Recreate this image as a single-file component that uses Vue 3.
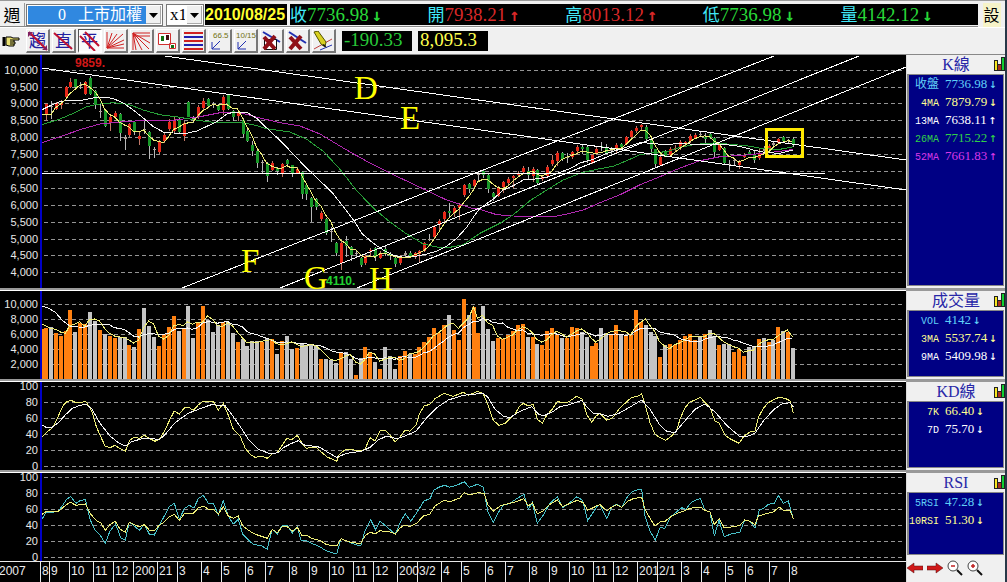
<script setup>
import { ref } from 'vue'

const quotes = [
  { name: '收', value: '7736.98', arrow: '↓', tone: 'down' },
  { name: '開', value: '7938.21', arrow: '↑', tone: 'up' },
  { name: '高', value: '8013.12', arrow: '↑', tone: 'up' },
  { name: '低', value: '7736.98', arrow: '↓', tone: 'down' },
  { name: '量', value: '4142.12', arrow: '↓', tone: 'down' },
]
const symbol = ref('taiex')
const zoomLevel = ref('1')

const panels = [
  {
    id: 'k', title: 'K線', top: 55, height: 233,
    rows: [
      ['收盤', '7736.98', '↓', 'cyan'],
      ['4MA', '7879.79', '↓', 'yellow'],
      ['13MA', '7638.11', '↑', 'white'],
      ['26MA', '7715.22', '↑', 'green'],
      ['52MA', '7661.83', '↑', 'magenta'],
    ],
  },
  {
    id: 'vol', title: '成交量', top: 291, height: 88,
    rows: [
      ['VOL', '4142', '↓', 'cyan'],
      ['3MA', '5537.74', '↓', 'yellow'],
      ['9MA', '5409.98', '↓', 'white'],
    ],
  },
  {
    id: 'kd', title: 'KD線', top: 382, height: 88,
    rows: [
      ['7K', '66.40', '↓', 'yellow'],
      ['7D', '75.70', '↓', 'white'],
    ],
  },
  {
    id: 'rsi', title: 'RSI', top: 473, height: 109,
    rows: [
      ['5RSI', '47.28', '↓', 'cyan'],
      ['10RSI', '51.30', '↓', 'yellow'],
    ],
  },
]

const percentTicks = (ys) => ys.map((y, i) => ({ y, text: String(100 - i * 20) }))
const ticks = {
  k: [70, 87, 103, 120, 137, 154, 171, 188, 205, 222, 239, 255, 272].map((y, i) => ({
    y, text: (10000 - i * 500).toLocaleString('en-US'),
  })),
  vol: [304, 319, 334, 349, 364].map((y, i) => ({ y, text: (10000 - i * 2000).toLocaleString('en-US') })),
  kd: percentTicks([386, 402, 418, 434, 450, 466]),
  rsi: percentTicks([477, 493, 509, 525, 541, 557]),
}

// Left edge of the k-th week.
const weekX = (k) => Math.floor(44.4 + 4.9157 * k)

// Curves are sampled on a grid of thirds; each run is [originX, originY, x, y, x, y, ...].
const curve = (...runs) => runs.map(([ox, oy, ...p]) => {
  const out = []
  for (let i = 0; i < p.length; i += 2) out.push(`${(ox + p[i] / 3).toFixed(1)},${(oy + p[i + 1] / 3).toFixed(1)}`)
  return out.join(' ')
}).join(' ')

// Weekly candles: colour, high, body top, body bottom, low.
const candleText = `r 148 150 180 200|w 140 155 160 195|r 143 148 165 168|r 138 146 152 165|r 95 98 130 132|r 72 85 98 102|g 75 75 100 104|w 84 92 94 106|r 82 84 120 124|g 66 72 120 124|g 108 112 150 165|w 150 170 173 192|g 165 168 215 218|r 182 188 208 232|r 172 178 188 192|g 178 180 236 262|w 242 248 254 288|r 206 210 242 250|g 200 204 232 242|r 235 245 256 272|w 198 225 228 240|g 230 234 275 315|w 280 284 286 312|r 258 262 294 300|r 238 242 262 266|r 196 204 226 230|r 185 198 232 236|g 192 195 235 240|r 200 206 246 262|g 142 145 188 190|w 185 192 196 208|r 152 158 190 196|r 132 140 162 168|g 132 134 155 158|w 145 150 153 162|g 150 154 168 172|r 122 130 168 182|g 122 124 165 168|g 168 172 188 200|r 172 174 186 200|g 192 198 240 250|g 226 230 262 264|g 262 274 292 306|g 288 292 328 342|w 318 324 326 358|g 324 328 366 384|r 320 326 348 352|g 340 342 350 362|r 328 330 356 370|g 314 318 330 336|g 332 334 356 368|r 338 344 356 360|g 352 354 420 434|g 388 394 420 438|g 430 432 458 504|g 432 436 460 468|r 470 476 496 502|g 492 496 536 544|w 520 530 532 564|g 564 568 598 606|r 562 566 626 648|g 546 560 576 608|g 575 580 604 620|w 592 598 600 608|g 608 612 632 638|r 600 606 626 632|r 582 588 592 606|g 578 582 608 622|r 592 598 612 616|g 575 584 598 606|g 595 600 606 618|g 608 612 630 640|r 602 608 626 632|w 592 598 602 610|g 592 596 606 612|r 594 598 606 616|r 588 592 600 626|r 564 568 590 594|w 540 556 558 562|r 512 518 548 556|r 496 502 512 532|r 470 474 496 506|g 446 470 476 490|r 456 462 478 488|r 448 452 462 498|r 390 394 422 428|g 386 390 404 418|r 374 378 396 402|w 354 360 362 382|g 348 352 362 372|g 356 362 404 416|g 414 418 428 442|r 396 402 426 430|r 380 384 400 416|r 370 376 386 396|r 364 366 372 402|r 350 358 362 368|r 336 342 354 358|g 340 352 362 376|r 338 346 366 384|g 346 348 386 390|r 362 368 376 382|r 334 338 366 372|r 302 318 330 336|r 292 298 320 336|g 294 296 316 320|w 296 308 312 326|r 290 294 310 316|r 274 280 290 304|g 270 278 284 300|g 276 280 318 328|r 300 304 326 330|r 280 286 298 302|g 264 276 280 290|g 270 280 296 300|w 280 288 292 302|r 268 272 284 300|g 266 270 278 282|r 246 250 270 274|r 228 232 250 258|r 216 222 232 238|r 210 214 220 230|g 212 220 256 262|g 252 258 286 300|g 284 286 330 342|r 304 308 332 336|g 288 290 306 310|r 280 284 302 306|r 272 282 286 292|r 258 264 282 288|r 260 264 270 280|r 240 246 262 268|r 236 242 252 256|w 232 240 242 250|g 236 250 254 270|g 236 240 252 256|g 248 252 294 312|r 266 272 288 292|g 278 282 326 332|w 318 330 332 350|w 312 318 320 336|r 318 322 334 346|r 298 306 310 312|g 288 294 300 304|g 292 302 318 326|r 286 298 312 318|w 276 284 290 296|r 270 276 284 290|w 264 268 272 280|r 252 254 266 268|g 246 250 262 268|w 254 258 262 266|g 248 256 274 280`
const candles = candleText.split('|').map((row, k) => {
  const [tone, ...n] = row.split(' ')
  const [high, top, bottom, low] = n.map((v) => Math.round(54 + Number(v) / 3))
  return { tone, high, top, low, x: weekX(k), h: Math.max(1, bottom - top), close: tone === 'g' ? bottom : top }
})

const average = (values, span, xs) => values.map((_, k) => {
  if (k < span - 1) return null
  const sum = values.slice(k - span + 1, k + 1).reduce((a, b) => a + b, 0)
  return `${xs(k) + 1.5},${(sum / span).toFixed(1)}`
}).filter(Boolean).join(' ')

const ma4 = '42,114.5 51,115 55,108 ' + average(candles.map((c) => c.close), 4, weekX)
const ma13 = curve(
  [0, 54, 126, 167, 150, 155, 180, 143, 210, 138, 250, 138, 280, 132, 320, 130, 345, 136, 370, 147, 400, 168, 430, 192, 460, 218, 490, 234, 520, 237, 560, 238, 590, 231, 625, 215, 650, 203, 680, 180, 700, 175],
  [240, 54, 0, 174, 20, 175, 50, 193, 80, 222, 110, 250, 150, 290, 180, 322, 210, 352, 250, 390, 280, 420, 310, 458, 345, 505, 365, 538, 400, 568, 430, 588, 460, 604, 490, 610, 530, 606, 560, 600, 590, 592, 620, 577, 650, 553, 680, 520, 705, 482],
  [480, 54, 0, 463, 40, 435, 70, 408, 100, 395, 130, 378, 160, 376, 200, 370, 240, 355, 270, 344, 300, 327, 340, 316, 380, 298, 420, 286, 450, 276, 480, 266, 520, 268, 545, 272, 580, 270],
  [680, 54, 0, 268, 60, 272, 100, 270, 160, 274, 190, 280, 220, 288, 260, 296, 300, 298, 340, 288],
)
const ma26 = curve(
  [0, 54, 126, 212, 180, 195, 220, 178, 260, 158, 290, 151, 340, 146, 385, 151, 430, 168, 480, 182, 540, 190, 600, 200, 650, 206],
  [240, 54, 0, 206, 40, 212, 80, 224, 150, 234, 200, 256, 250, 292, 300, 346, 350, 410, 400, 462, 450, 504, 500, 540, 550, 570, 590, 579, 630, 580, 670, 572],
  [480, 54, 0, 538, 60, 508, 100, 482, 150, 440, 200, 408, 250, 378, 300, 358, 350, 346, 400, 337, 440, 320, 480, 302, 520, 296, 560, 293],
  [680, 54, 0, 280, 40, 272, 80, 268, 140, 270, 200, 275, 250, 284, 300, 286, 340, 278],
)
const ma52 = curve(
  [0, 54, 126, 266, 180, 248, 240, 227, 300, 210, 360, 204, 420, 200, 520, 199, 600, 188, 660, 176],
  [240, 54, 0, 176, 60, 192, 120, 206, 180, 216, 240, 240, 310, 282, 380, 322, 460, 362, 540, 400, 620, 438, 700, 464],
  [480, 54, 0, 466, 50, 482, 100, 486, 160, 489, 220, 488, 260, 480, 310, 468, 360, 446, 420, 422, 480, 392, 540, 368],
  [680, 54, 0, 342, 60, 320, 120, 308, 200, 303, 250, 298, 300, 292, 340, 286],
)

const trends = [
  [165, 56, 906, 160], [42, 68, 906, 190], [42, 173, 825, 173],
  [182, 288, 774, 56], [280, 288, 859, 56], [357, 288, 906, 67],
]
const marks = [
  { text: 'D', x: 354, y: 99 }, { text: 'E', x: 400, y: 129 }, { text: 'F', x: 241, y: 272 },
  { text: 'G', x: 304, y: 289 }, { text: 'H', x: 369, y: 290 },
]

// Weekly volume: colour (o = up week, g = down week) and bar top.
const volumeText = 'o126 g124 o141 o150 o136 o72 g138 o112 o115 g78 g105 o132 g144 o150 o155 g152 g153 o177 g183 o129 g66 g120 g153 o180 o145 o124 o90 g135 o129 g60 g156 o108 o60 g102 g138 g117 o108 g108 g142 o168 g160 g180 g165 g165 o167 g156 o160 g204 o165 g150 g189 o186 g171 g180 g177 g178 o219 g219 g222 g231 o201 g198 g219 o267 g216 o183 o198 g228 o249 g183 g210 g249 o210 o195 g204 o204 o183 o168 o153 o126 o141 o117 g87 o132 o162 o39 g87 o63 o141 g60 g129 g165 o156 o160 o147 o135 o117 o114 g153 o153 g174 o177 o135 o126 o147 g156 o156 o123 o127 g138 g153 o180 o171 g126 g141 o145 o117 g145 o150 o147 o72 o108 g117 g138 g150 o213 g177 o174 o177 o162 o150 o145 o163 g150 o145 g132 g150 o177 g174 g174 o198 o189 o210 g183 g183 o159 g156 o168 g163 o123 g135 o138 g186'
const volumes = volumeText.split(' ').map((v, k) => ({
  tone: v[0], x: weekX(k), y: Math.round(286 + Number(v.slice(1)) / 3),
}))
const volumeTops = volumes.map((v) => v.y)
const vol3 = '42,324 50,328 ' + average(volumeTops, 3, weekX)
const vol9 = '42,306 48,308 55,312 63,321 70,326 78,327 ' + average(volumeTops, 9, weekX)

const kLine = curve(
  [0, 286, 126, 452, 145, 435, 160, 423, 175, 390, 190, 358, 200, 347, 213, 343, 228, 350, 258, 347, 275, 375, 290, 425, 315, 480, 330, 485, 345, 478, 360, 488, 376, 496, 390, 462, 405, 453, 418, 457, 433, 448, 450, 458, 465, 466, 480, 458, 495, 432, 510, 400, 523, 375, 538, 384, 553, 366, 565, 363, 580, 373, 595, 357, 610, 346, 640, 346, 655, 373, 670, 352, 685, 388, 700, 430, 720, 450, 735, 485, 750, 505, 765, 514, 785, 511, 802, 517, 817, 504, 832, 500, 845, 480, 860, 457, 875, 461, 892, 448, 905, 470, 918, 487, 935, 484, 950, 486],
  [320, 286, 0, 495, 20, 512, 50, 526, 58, 505, 75, 492, 90, 490, 105, 493, 125, 495, 135, 490, 150, 455, 165, 465, 180, 434, 195, 433, 210, 448, 226, 468, 240, 453, 255, 432, 270, 436, 288, 418, 298, 385, 312, 360, 330, 355, 345, 338, 372, 322, 400, 331, 430, 319, 445, 328, 473, 316, 490, 323, 505, 360, 520, 403, 537, 418, 555, 412, 570, 398, 585, 385, 597, 363, 610, 352, 625, 360, 640, 355, 652, 400, 667, 411, 680, 388, 698, 368, 712, 346, 725, 350, 745, 348, 770, 331, 787, 340, 800, 385, 815, 409, 828, 390],
  [600, 286, 0, 382, 20, 403, 38, 395, 55, 372, 75, 352, 95, 334, 112, 332, 125, 323, 135, 355, 150, 410, 165, 445, 180, 455, 197, 463, 215, 450, 230, 432, 240, 400, 255, 365, 270, 348, 285, 342, 301, 334, 315, 350, 330, 365, 345, 405, 358, 412, 375, 448, 390, 458, 417, 472, 432, 450, 450, 438, 465, 436, 475, 395, 490, 367, 505, 350, 520, 342, 537, 334, 555, 337, 570, 344, 580, 380],
)
const dLine = curve(
  [0, 286, 126, 417, 140, 425, 155, 425, 175, 410, 195, 388, 215, 368, 240, 358, 258, 355, 275, 368, 300, 412, 330, 450, 355, 470, 376, 480, 395, 467, 430, 457, 480, 460, 500, 440, 525, 410, 565, 382, 600, 368, 640, 354, 655, 360, 675, 358, 700, 392, 725, 428, 745, 460, 775, 490, 810, 503, 835, 500, 850, 485, 875, 472, 895, 464, 915, 478, 945, 481],
  [320, 286, 0, 484, 25, 500, 50, 514, 80, 502, 125, 496, 150, 484, 175, 462, 200, 450, 230, 458, 260, 448, 288, 435, 320, 396, 350, 365, 385, 342, 430, 328, 490, 322, 505, 335, 525, 370, 550, 390, 570, 395, 600, 376, 635, 362, 655, 384, 670, 390, 700, 376, 720, 362, 745, 357, 785, 343, 800, 362, 820, 382],
  [600, 286, 0, 384, 25, 391, 55, 383, 90, 363, 125, 342, 150, 370, 180, 418, 200, 436, 225, 440, 250, 410, 285, 370, 315, 354, 345, 378, 380, 418, 417, 450, 445, 450, 465, 442, 490, 405, 520, 372, 545, 354, 570, 350, 580, 362],
)
const rsi10 = curve(
  [0, 286, 126, 685, 138, 677, 175, 676, 192, 662, 210, 648, 228, 658, 256, 654, 272, 685, 290, 704, 302, 710, 316, 733, 330, 716, 346, 706, 360, 730, 376, 738, 388, 708, 405, 717, 418, 722, 433, 716, 448, 732, 463, 734, 478, 718, 493, 708, 508, 692, 523, 685, 538, 703, 553, 683, 565, 682, 580, 682, 595, 666, 610, 660, 625, 669, 640, 670, 655, 684, 670, 662, 685, 690, 700, 697, 715, 690, 728, 720, 745, 732, 757, 740, 775, 748, 802, 757, 817, 730, 832, 740, 847, 722, 862, 722, 877, 736, 892, 724, 905, 748, 920, 748, 935, 757, 955, 762],
  [320, 286, 0, 763, 20, 776, 50, 780, 63, 758, 80, 765, 95, 770, 122, 772, 135, 750, 150, 738, 165, 744, 180, 734, 210, 738, 226, 744, 240, 726, 255, 717, 270, 722, 290, 712, 310, 690, 330, 684, 345, 660, 372, 643, 390, 647, 420, 636, 432, 620, 448, 627, 475, 620, 492, 622, 503, 655, 520, 676, 540, 660, 560, 654, 585, 648, 612, 638, 625, 660, 637, 650, 652, 684, 670, 674, 690, 655, 712, 642, 728, 662, 750, 652, 772, 643, 790, 650, 803, 672, 820, 665, 832, 658],
  [600, 286, 0, 656, 20, 674, 35, 664, 50, 656, 65, 664, 85, 645, 100, 638, 125, 634, 135, 670, 150, 697, 165, 720, 180, 708, 195, 706, 215, 690, 235, 680, 250, 676, 270, 667, 301, 663, 315, 673, 330, 678, 343, 715, 358, 698, 373, 726, 400, 722, 420, 718, 434, 702, 450, 706, 465, 716, 475, 690, 495, 684, 520, 678, 537, 663, 550, 672, 570, 672, 580, 698],
)
const rsi5 = curve(
  [0, 286, 126, 700, 138, 679, 155, 679, 175, 676, 190, 655, 200, 640, 212, 631, 228, 652, 240, 644, 256, 640, 270, 700, 285, 732, 302, 750, 316, 772, 330, 735, 347, 714, 362, 755, 376, 762, 388, 708, 405, 722, 418, 733, 433, 716, 448, 744, 463, 747, 478, 718, 493, 690, 508, 662, 523, 652, 538, 700, 553, 668, 568, 658, 582, 666, 595, 638, 610, 628, 625, 652, 640, 652, 655, 686, 670, 644, 685, 690, 700, 714, 715, 700, 728, 745, 745, 762, 760, 775, 785, 780, 802, 790, 817, 730, 832, 744, 847, 718, 862, 718, 877, 741, 892, 722, 903, 763, 920, 764, 940, 774, 955, 780],
  [320, 286, 0, 783, 20, 795, 50, 804, 63, 758, 80, 765, 95, 772, 122, 780, 135, 735, 152, 702, 167, 732, 180, 706, 200, 722, 226, 745, 240, 710, 256, 683, 272, 706, 290, 680, 312, 645, 330, 638, 342, 612, 360, 602, 375, 598, 388, 604, 410, 598, 433, 587, 448, 604, 472, 595, 490, 603, 503, 675, 520, 710, 535, 680, 550, 658, 570, 652, 590, 638, 612, 625, 625, 670, 637, 650, 652, 712, 668, 690, 690, 652, 712, 632, 728, 665, 745, 654, 770, 632, 788, 643, 803, 704, 820, 678, 832, 660],
  [600, 286, 0, 656, 20, 698, 35, 664, 50, 654, 65, 665, 80, 635, 95, 618, 110, 612, 125, 610, 135, 690, 150, 735, 166, 762, 180, 725, 195, 727, 212, 692, 245, 665, 257, 670, 275, 648, 301, 637, 315, 673, 330, 678, 343, 750, 357, 703, 373, 753, 390, 745, 420, 738, 434, 702, 450, 706, 465, 726, 478, 672, 490, 668, 505, 655, 523, 652, 535, 628, 550, 652, 565, 645, 580, 698],
)

const months = [
  [40, '8'], [49, '9'], [69, '10'], [93, '11'], [113, '12'], [133, '200'], [157, '21'], [177, '3'], [201, '4'],
  [221, '5'], [245, '6'], [265, '7'], [289, '8'], [309, '9'], [329, '10'], [353, '11'], [373, '12'], [397, '200'],
  [417, '3/2'], [441, '4'], [461, '5'], [485, '6'], [505, '7'], [529, '8'], [549, '9'], [569, '10'], [593, '11'],
  [613, '12'], [637, '201'], [657, '2/1'], [681, '3'], [701, '4'], [725, '5'], [745, '6'], [769, '7'], [789, '8'],
]
</script>

<template>
  <main class="app">
    <header class="top">
      <button class="week" type="button">週</button>
      <div class="pick symbol">
        <select v-model="symbol" aria-label="股票代號"><option value="taiex">0&nbsp;&nbsp;&nbsp;上市加權</option></select>
        <svg viewBox="0 0 15 18" aria-hidden="true"><path d="M3 7h9l-4.500 5z" /></svg>
      </div>
      <div class="pick scale">
        <select v-model="zoomLevel" aria-label="倍率"><option value="1">x1</option></select>
        <svg viewBox="0 0 15 18" aria-hidden="true"><path d="M3 7h9l-4.500 5z" /></svg>
      </div>
      <time class="date">2010/08/25</time>
      <div class="quotes">
        <div v-for="q in quotes" :key="q.name" :class="q.tone">
          <span class="name">{{ q.name }}</span>{{ q.value }}<b>{{ q.arrow }}</b>
        </div>
      </div>
      <button class="settings" type="button">設</button>
    </header>

    <nav class="tools">
      <button type="button" class="flat" aria-label="指標">
        <svg viewBox="0 0 21 20"><path d="M3 6v9" stroke="#000" stroke-width="3" /><path d="M5 6h5l2 1h6v2h-5v2h1v2h-1v2H8l-3-1z" fill="#e8e070" stroke="#000" /><path d="M9 9h4M9 11h4M9 13h4" stroke="#000" /></svg>
      </button>
      <button type="button" class="glyph" aria-label="趨勢線"><span>趨</span>
        <svg viewBox="0 0 21 20"><path d="M2 1l18 18" stroke="#c01030" stroke-width="2" /><path d="M1 1h5L1 6zM20 19h-5l5-5z" fill="#802060" /></svg>
      </button>
      <button type="button" class="glyph" aria-label="直線"><span>直</span>
        <svg viewBox="0 0 21 20"><path d="M1 2l18 16" stroke="#c01030" stroke-width="2" /></svg>
      </button>
      <button type="button" class="glyph pressed" aria-label="平行線"><span>平</span>
        <svg viewBox="0 0 21 20"><path d="M1 5l15 15M6 1l14 14" stroke="#c01030" stroke-width="2" /></svg>
      </button>
      <button type="button" aria-label="上升扇形">
        <svg viewBox="0 0 21 20"><path d="M2 1v16h17M2 17L7 2M2 17L12 3M2 17L18 3M2 17L19 9M2 17L19 13" stroke="#d02020" fill="none" /></svg>
      </button>
      <button type="button" aria-label="下降扇形">
        <svg viewBox="0 0 21 20"><path d="M2 19V2h17M2 5h17M2 2l3 17M2 2l9 17M2 2l16 16M2 2l17 10" stroke="#d02020" fill="none" /></svg>
      </button>
      <button type="button" aria-label="區間">
        <svg viewBox="0 0 21 20"><path d="M1.500 2.500h12v11h-12zM12.500 12.500h6v5h-6z" fill="#fff" stroke="#d03030" /><path d="M4 5h3v5H4zM14 14h3v3h-3z" fill="#107010" /><path d="M9 4h3v5H9z" fill="#401010" /></svg>
      </button>
      <button type="button" aria-label="黃金分割">
        <svg viewBox="0 0 21 20"><path d="M1 2h19M1 10h19M1 18h19" stroke="#d02020" stroke-width="2" /><path d="M1 6h19M1 14h19" stroke="#2020b0" stroke-width="2" /></svg>
      </button>
      <button type="button" aria-label="角度 66.5">
        <svg viewBox="0 0 21 20"><text x="4" y="7">66.5</text><path d="M11 10l-8 8M3 11v7h8" stroke="#2030b0" fill="none" /></svg>
      </button>
      <button type="button" aria-label="角度 10/15">
        <svg viewBox="0 0 21 20"><text x="1" y="7">10/15</text><path d="M11 10l-8 8M3 11v7h8" stroke="#2030b0" fill="none" /></svg>
      </button>
      <button type="button" aria-label="刪除全部">
        <svg viewBox="0 0 21 20"><path d="M2 1l17 10" stroke="#2030b0" stroke-width="2" /><path d="M3.500 8.500h12v10h-12z" fill="#fff" stroke="#111" /><path d="M3 6l11 12M14 5L3 18" stroke="#901018" stroke-width="4" /></svg>
      </button>
      <button type="button" aria-label="刪除">
        <svg viewBox="0 0 21 20"><path d="M2 1l17 11" stroke="#2030b0" stroke-width="2" /><path d="M3 6l11 12M14 5L3 18" stroke="#901018" stroke-width="4" /></svg>
      </button>
      <button type="button" aria-label="畫線">
        <svg viewBox="0 0 21 20"><path d="M1 18l18-10" stroke="#c04040" /><path d="M7 19l12-5" stroke="#2030b0" /><path d="M1 1l4-1 8 11-1 5-4-3z" fill="#d8d020" stroke="#555500" /><path d="M11 13l3 4-5-3z" fill="#111" /></svg>
      </button>
      <output class="diff">-190.33</output>
      <output class="level">8,095.3</output>
    </nav>

    <section v-for="p in panels" :key="p.id" class="row" :class="p.id">
      <svg class="plot" :viewBox="`0 ${p.top} 906 ${p.height}`" role="img" :aria-label="p.title">
        <g class="grid">
          <path v-for="t in ticks[p.id]" :key="t.y" :d="`M44 ${t.y + 0.5}H903`" />
        </g>
        <g class="ticks">
          <text v-for="t in ticks[p.id]" :key="t.y" x="38" :y="t.y + 4">{{ t.text }}</text>
        </g>
        <path class="axis" :d="`M41 ${p.top}V${p.id === 'rsi' ? 561 : p.top + p.height}`" />

        <template v-if="p.id === 'k'">
          <g v-for="c in candles" :key="c.x" :class="['candle', c.tone]">
            <rect class="wick" :x="c.x + 2" :y="c.high" width="1" :height="c.low - c.high" />
            <rect class="body" :x="c.x + 1" :y="c.top" width="3" :height="c.h" />
          </g>
          <polyline class="magenta" :points="ma52" />
          <polyline class="green" :points="ma26" />
          <polyline class="white" :points="ma13" />
          <polyline class="yellow" :points="ma4" />
          <line v-for="(t, i) in trends" :key="i" class="trend" :x1="t[0]" :y1="t[1]" :x2="t[2]" :y2="t[3]" />
          <rect class="focus" x="766.500" y="129.500" width="36" height="27" />
          <text class="peak" x="75" y="67">9859.</text>
          <text class="trough" x="326" y="285">4110.</text>
          <text v-for="m in marks" :key="m.text" class="mark" :x="m.x" :y="m.y">{{ m.text }}</text>
        </template>

        <template v-else-if="p.id === 'vol'">
          <rect class="bar o" x="42" y="329" width="2" height="50" />
          <rect v-for="v in volumes" :key="v.x" :class="['bar', v.tone]" :x="v.x" :y="v.y" width="4" :height="379 - v.y" />
          <polyline class="white" :points="vol9" />
          <polyline class="yellow" :points="vol3" />
        </template>

        <template v-else-if="p.id === 'kd'">
          <polyline class="yellow" :points="kLine" />
          <polyline class="white" :points="dLine" />
        </template>

        <template v-else>
          <polyline class="cyan" :points="rsi5" />
          <polyline class="yellow" :points="rsi10" />
          <path class="rule" d="M0 561.500H906" />
          <path v-for="m in months" :key="m[0]" class="rule" :d="`M${m[0] + 0.5} 562V582`" />
          <g class="months">
            <text x="-1" y="575">2007</text>
            <text v-for="m in months" :key="m[0]" :x="m[0] + 2" y="575">{{ m[1] }}</text>
          </g>
        </template>
      </svg>

      <aside class="side">
        <h2>{{ p.title }}
          <svg viewBox="0 0 11 14" aria-hidden="true"><path d="M0 3h4v4h3V0h4v14H0z" fill="#222" /><path d="M1 4h2v9H1z" fill="#f8e820" /><path d="M4 8h3v5H4z" fill="#a83020" /><path d="M8 1h2v12H8z" fill="#10d030" /></svg>
        </h2>
        <dl>
          <div v-for="r in p.rows" :key="r[0]" :class="r[3]">
            <dt>{{ r[0] }}</dt><dd>{{ r[1] }}<i>{{ r[2] }}</i></dd>
          </div>
        </dl>
        <div v-if="p.id === 'rsi'" class="nav">
          <button type="button" aria-label="向左"><svg viewBox="0 0 16 12"><path d="M0 6l7-5v3h9v4H7v3z" fill="#d01818" stroke="#501010" stroke-width=".5" /></svg></button>
          <button type="button" aria-label="向右"><svg viewBox="0 0 16 12"><path d="M16 6L9 1v3H0v4h9v3z" fill="#d01818" stroke="#501010" stroke-width=".5" /></svg></button>
          <button type="button" aria-label="縮小"><svg viewBox="0 0 16 16"><circle cx="6" cy="6" r="5" fill="#fff" stroke="#444" /><path d="M10 10l5 5" stroke="#111" stroke-width="2" /><path d="M4 6h4" stroke="#c02020" stroke-width="1.500" /></svg></button>
          <button type="button" aria-label="放大"><svg viewBox="0 0 16 16"><circle cx="6" cy="6" r="5" fill="#fff" stroke="#444" /><path d="M10 10l5 5" stroke="#111" stroke-width="2" /><path d="M4 6h4M6 4v4" stroke="#c02020" stroke-width="1.500" /></svg></button>
        </div>
      </aside>
    </section>
  </main>
</template>

<style>
body { margin: 0; background: #f0f0f0; }
</style>

<style scoped>
* { box-sizing: border-box; }
.app {
  background: #f0f0f0;
  border-right: 2px solid #283848;
  font-family: "Liberation Serif", "Noto Sans CJK TC", serif;
}
button { font: inherit; padding: 0; margin: 0; cursor: pointer; }

.top { display: flex; align-items: center; height: 27px; padding-top: 2px; border-top: 1px solid #999; border-bottom: 1px solid #888; }
.week { width: 25px; height: 23px; border: 0; border-right: 1px solid #999; background: #f0f0f0; font: 17px/22px "Noto Sans CJK TC", sans-serif; }
.pick { display: flex; height: 22px; border: 1px solid #777; background: #fff; padding: 1px; }
.pick select { appearance: none; flex: 1; min-width: 0; border: 0; padding: 0 4px; font: 16px/18px "Liberation Serif", "Noto Sans CJK TC", serif; border-radius: 0; background: #fff; color: #000; outline: 0; }
.pick svg { width: 15px; height: 18px; background: #f0f0f0; box-shadow: inset -1px -1px #aaa; pointer-events: none; }
.symbol { width: 137px; margin: 0 3px 0 1px; }
.symbol select { background: #3088e0; color: #fff; text-align-last: right; }
.scale { width: 38px; }
.scale select { padding: 0 2px; font-size: 17px; }
.date { margin: 0 3px 0 1px; width: 82px; height: 21px; background: #000; color: #ffff30; font: bold 16px/21px "Liberation Sans", sans-serif; white-space: nowrap; }
.quotes { flex: 1; display: grid; grid-template-columns: repeat(5, 1fr); height: 21px; background: #000; font-size: 19px; line-height: 20px; white-space: nowrap; }
.quotes .name { color: #40e8f8; font: 17px/20px "Noto Sans CJK TC", sans-serif; }
.quotes b { margin-left: 3px; font: bold 17px/20px "DejaVu Sans Mono", monospace; }
.down { color: #28d838; }
.up { color: #d82828; }
.settings { width: 27px; height: 24px; border: 0; background: #f6f3c8; font: 16px/23px "Noto Sans CJK TC", sans-serif; box-shadow: inset 5px 0 #f0f0f0, inset -4px 0 #f0f0f0; }

.tools { display: flex; align-items: center; gap: 2px; height: 28px; border-top: 1px solid #fff; border-bottom: 1px solid #888; }
.tools button { position: relative; width: 24px; height: 24px; border: 1px solid; border-color: #fff #777 #777 #fff; border-right-width: 2px; border-bottom-width: 2px; background: #f0f0f0; }
.tools button.flat { border-color: #f0f0f0; }
.tools button.pressed { border-color: #555 #fff #fff #555; background: #fafafa; }
.tools button svg { display: block; width: 21px; height: 20px; }
.tools .glyph span { position: absolute; inset: 0; color: #2020a0; font: 17px/20px "Noto Sans CJK TC", sans-serif; }
.tools .glyph svg { position: relative; fill: none; }
.tools text { font: 8px "Liberation Sans", sans-serif; fill: #707010; }
.tools output { width: 70px; height: 20px; background: #000; padding-left: 2px; font-size: 19px; line-height: 18px; }
.tools .diff { margin: 0 4px; color: #28c838; }
.tools .level { color: #ffff50; }

.row { display: grid; grid-template-columns: minmax(0, 1fr) 99px; border-bottom: 3px solid #999; }
.row.rsi { border-bottom: 0; }
.row:not(.rsi) .plot { box-shadow: 0 2px #999, 0 3px #fff; }
.plot { display: block; width: 100%; background: #000; overflow: visible; fill: none; position: relative; }
.k .plot { z-index: 1; }
.plot polyline, .plot line, .plot path { shape-rendering: crispEdges; }
.grid { stroke: #949494; stroke-dasharray: 4 3; }
.ticks { fill: #e8e8e8; font: 11px "Liberation Sans", sans-serif; text-anchor: end; }
.axis { stroke: #0000c8; stroke-width: 2; }
.rule { stroke: #e8e8e8; }
.months { fill: #ececec; font: 12px "Liberation Sans", sans-serif; }
.trend { stroke: #fff; }
polyline.white { stroke: #f4f4f4; }
polyline.yellow { stroke: #eeee78; }
polyline.green { stroke: #28a038; }
polyline.magenta { stroke: #b028b0; }
polyline.cyan { stroke: #48c0c8; }
.wick { fill: #b8b8b8; }
.r .wick { fill: #c07868; }
.r .body { fill: #e82818; }
.g .body { fill: #189828; }
.w .body { fill: #b0a098; }
.focus { stroke: #ffe800; stroke-width: 3; }
.peak, .trough { font: bold 12px "Liberation Sans", sans-serif; fill: #d01818; }
.trough { fill: #20d030; }
.mark { font: 33px "Liberation Serif", serif; fill: #ffff00; }
.bar.o { fill: #ff8010; }
.bar.g { fill: #c4c4c4; }

.side { display: flex; flex-direction: column; min-height: 0; border-left: 1px solid #ddd; padding-bottom: 2px; }
.side h2 { display: flex; align-items: center; justify-content: center; position: relative; margin: 0; height: 19px; font-size: 16px; line-height: 18px; font-weight: normal; color: #2828a8; }
.side h2 svg { position: absolute; right: 0; top: 2px; width: 11px; height: 14px; }
.side dl { flex: 1; margin: 0 1px 0 0; padding: 0; background: #000084; border: 1px solid #888; border-left-width: 2px; }
.side dl div { display: grid; grid-template-columns: 30px 1fr; column-gap: 6px; align-items: baseline; height: 18px; line-height: 17px; }
.side dt { text-align: right; white-space: nowrap; font: 10px/17px "Liberation Mono", "Noto Sans CJK TC", monospace; }
.k dl div:first-child dt { font-size: 12px; }
.side dd { margin: 0; font-size: 13px; white-space: nowrap; }
.side i { font: 13px/17px "DejaVu Sans Mono", monospace; margin-left: 2px; }
dl .cyan { color: #60d0f8; }
dl .yellow { color: #ffff90; }
dl .white { color: #fff; }
dl .green { color: #30d048; }
dl .magenta { color: #d838e8; }
.nav { display: flex; align-items: center; gap: 4px; height: 25px; }
.nav button { width: 16px; height: 20px; border: 0; background: none; }
.nav svg { display: block; width: 16px; }
</style>
